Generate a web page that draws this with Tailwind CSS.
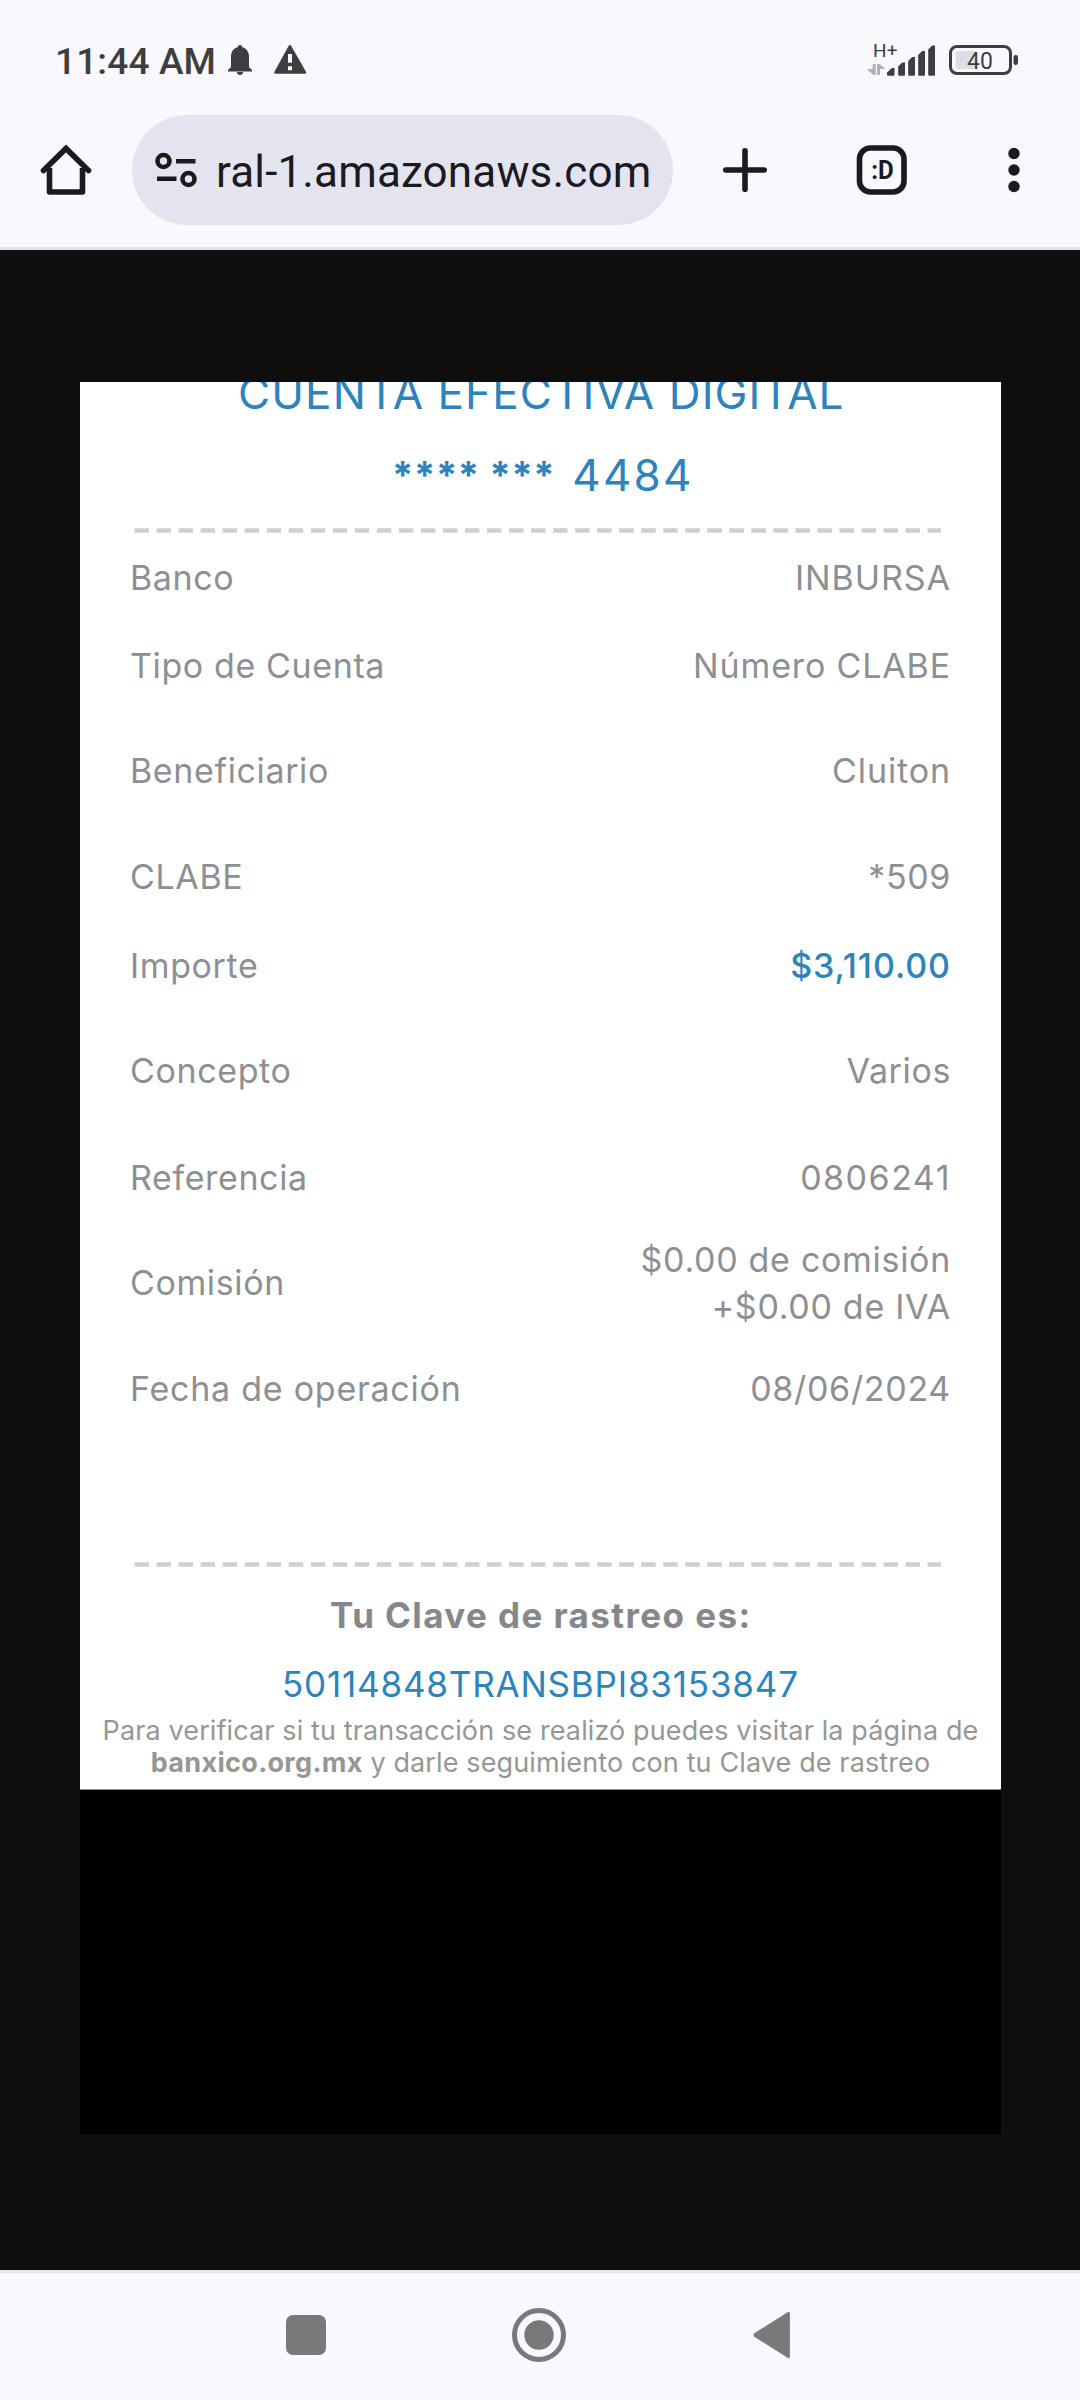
<!DOCTYPE html>
<html lang="es">
<head>
<meta charset="utf-8">
<title>Comprobante</title>
<script src="https://cdn.jsdelivr.net/npm/@tailwindcss/browser@4"></script>
</head>
<body class="w-[1080px] h-[2400px] overflow-hidden flex flex-col bg-[#0e0e0e] font-['Roboto',sans-serif]">

<!-- Status bar and browser toolbar -->
<header class="h-[250px] shrink-0 bg-[#f9f8ff] border-b-[3px] border-[#e2e1ec] flex flex-col">
  <div class="h-[115px] pt-[12px] pl-[55px] pr-[60px] flex items-center text-[#3e3e40]">
    <span class="text-[37px] leading-[44px] font-medium tracking-[0.14px] h-[48px]">11:44 AM</span>
    <svg class="ml-[10px] -mt-[7px]" width="84" height="34" viewBox="226 43 84 34" fill="#3e3e40">
      <path d="M240 45c1.500 0 2.300 1 2.400 2.300C246.500 48.500 249 52 249 56.500V67l3 3v1.500H228V70l3-3V56.500c0-4.500 2.500-8 6.600-9.200.1-1.300.9-2.300 2.400-2.300zM236.800 72h6.400c-.4 2-1.500 3-3.200 3s-2.800-1-3.200-3z"/>
      <path fill-rule="evenodd" d="M288.700 45.800q1.200-1.600 2.400 0l15 26.200q.6 1.800-1 1.800h-29.800q-1.600 0-1-1.800zM288 54v8.800h4V54zm0 12.300v4h4v-4z"/>
    </svg>
    <svg class="ml-auto -mt-[7px]" width="156" height="40" viewBox="864 40 156 40" fill="#3e3e40" font-family="Roboto, sans-serif">
      <text x="873" y="57" font-size="19" letter-spacing=".3">H+</text>
      <g fill="#b2b1b7"><path d="M872.700 64h3v11h-2l-6-5v-1h5zM877 75h3v-6h4.500v-1l-5-4H877z"/></g>
      <path d="M887 72.500l5-4.500h2.500v6.500q0 1.200-1.200 1.200h-5q-1.300 0-1.300-1.200zM898.200 66.500l4-4h2.800v12q0 1.200-1.200 1.200h-4.400q-1.200 0-1.200-1.200zM908.200 61l4-4h2.800v17.500q0 1.200-1.200 1.200h-4.400q-1.200 0-1.200-1.200zM918.200 55l4-4h2.800v23.500q0 1.200-1.200 1.200h-4.400q-1.200 0-1.200-1.200zM928.200 49.500l4-4h2.800v29q0 1.200-1.200 1.200h-4.400q-1.200 0-1.200-1.200z"/>
      <rect x="955.500" y="51" width="21" height="18" rx="3" fill="#e0dee5"/>
      <rect x="950.500" y="46.500" width="60" height="27" rx="6.500" fill="none" stroke="#3e3e40" stroke-width="3"/>
      <rect x="1013.500" y="55" width="4.500" height="10" rx="2.200"/>
      <text x="967" y="69" font-size="23">40</text>
    </svg>
  </div>
  <div class="h-[110px] flex items-center text-[#1b1a20]">
    <svg class="ml-[39px]" width="54" height="54" viewBox="39 143 54 54" fill="none" stroke="#1b1a20" stroke-width="5.600">
      <path d="M49.500 168V192H82.500V168" stroke-linejoin="round"/>
      <path d="M43.500 170.500L66 148.500L88.500 170.500" stroke-linecap="round"/>
    </svg>
    <div class="ml-[39px] w-[541px] h-[110px] rounded-[55px] bg-[#e4e4f0] flex items-center">
      <svg class="ml-[21px]" width="46" height="40" viewBox="153 150 46 40" fill="none" stroke="#1b1a20" stroke-width="4.600">
        <circle cx="163.500" cy="161" r="6"/><path d="M176 161.300h19.500M157 178.800h19.500"/><circle cx="188.500" cy="179" r="6"/>
      </svg>
      <span class="ml-[17px] text-[44px] leading-[52px] tracking-[0.15px] mt-[4px] whitespace-nowrap">ral-1.amazonaws.com</span>
    </div>
    <svg class="ml-[48px]" width="48" height="48" viewBox="0 0 48 48" stroke="#1b1a20" stroke-width="5.600" stroke-linecap="round"><path d="M24 4.800v38.400M4.800 24h38.400"/></svg>
    <svg class="ml-[87px]" width="52" height="52" viewBox="856 144 52 52" font-family="Roboto, sans-serif">
      <rect x="859.500" y="148" width="44.500" height="44" rx="11" fill="none" stroke="#1b1a20" stroke-width="5.600"/>
      <text x="871.300" y="179" font-size="26" font-weight="700" textLength="22.500" lengthAdjust="spacingAndGlyphs" fill="#1b1a20">:D</text>
    </svg>
    <svg class="ml-[100px]" width="12" height="48" viewBox="0 0 12 48" fill="#1b1a20"><circle cx="6" cy="7.500" r="5.700"/><circle cx="6" cy="24" r="5.700"/><circle cx="6" cy="40.500" r="5.700"/></svg>
  </div>
</header>

<!-- Image viewer -->
<main class="flex-1 pt-[132px] pl-[80px]">
  <div class="w-[921px] h-[1752px] bg-black font-['Inter',sans-serif] text-[34px] text-[#8e8f94]">
    <article class="h-[1408px] bg-white overflow-hidden border-b border-[#8a8a8a] flex flex-col">
      <div class="-mt-[17px] h-[56px] shrink-0 pl-[158px] text-[44px] leading-[56px] tracking-[1.1px] text-[#2c83bd] whitespace-nowrap">CUENTA EFECTIVA DIGITAL</div>
      <div class="mt-[26px] h-[56px] shrink-0 pl-[312px] text-[44px] leading-[56px] text-[#2c83bd] flex whitespace-nowrap"><span class="text-[38px] font-bold tracking-[0.7px]">**** ***</span><span class="ml-[17px] tracking-[2.2px]">4484</span></div>
      <svg class="mt-[25px] ml-[54px] shrink-0" width="808" height="5" viewBox="0 0 808 5"><path d="M0.500 2.500H807" stroke="#cfcfd0" stroke-width="4.500" stroke-dasharray="14.500 7.530"/></svg>

      <div class="px-[50px] tracking-[0.62px] leading-[47px] text-right">
        <div class="h-[88px] flex items-center justify-between"><span>Banco</span><span class="tracking-[0.95px]">INBURSA</span></div>
        <div class="h-[89px] flex items-center justify-between"><span>Tipo de Cuenta</span><span class="tracking-[0.85px]">Número CLABE</span></div>
        <div class="h-[120px] flex items-center justify-between"><span>Beneficiario</span><span class="tracking-[0.9px]">Cluiton</span></div>
        <div class="h-[93px] flex items-center justify-between"><span>CLABE</span><span>*509</span></div>
        <div class="h-[84px] flex items-center justify-between"><span>Importe</span><span class="font-medium tracking-[0.94px] text-[#2c83bd]">$3,110.00</span></div>
        <div class="h-[127px] flex items-center justify-between"><span>Concepto</span><span>Varios</span></div>
        <div class="h-[86px] flex items-center justify-between"><span>Referencia</span><span class="tracking-[1.5px]">0806241</span></div>
        <div class="h-[125px] flex items-center justify-between"><span>Comisión</span><span class="tracking-[0.7px]">$0.00 de comisión<br>+$0.00 de IVA</span></div>
        <div class="h-[87px] flex items-center justify-between"><span class="tracking-[0.75px]">Fecha de operación</span><span class="tracking-[0.7px]">08/06/2024</span></div>
      </div>

      <svg class="mt-[130px] ml-[54px] shrink-0" width="808" height="5" viewBox="0 0 808 5"><path d="M0.500 2.500H807" stroke="#cfcfd0" stroke-width="4.500" stroke-dasharray="14.500 7.530"/></svg>
      <div class="mt-[24px] h-[48px] shrink-0 pl-[250px] text-[35px] leading-[48px] font-bold tracking-[1.4px] text-[#86878c] whitespace-nowrap">Tu Clave de rastreo es:</div>
      <div class="mt-[21px] h-[48px] shrink-0 pl-[202px] text-[35px] leading-[48px] tracking-[0.8px] text-[#2c83bd] whitespace-nowrap">50114848TRANSBPI83153847</div>
      <div class="mt-[7px] shrink-0 text-center text-[27px] leading-[32px] tracking-[0.12px] text-[#969696] whitespace-nowrap">Para verificar si tu transacción se realizó puedes visitar la página de<br><b class="font-bold tracking-[0.32px]">banxico.org.mx</b> y darle seguimiento con tu Clave de rastreo</div>
    </article>
  </div>
</main>

<!-- System navigation -->
<nav class="h-[130px] pb-[3px] shrink-0 bg-[#f9f8ff] border-t-[3px] border-[#e4e4ec] flex items-center">
  <div class="ml-[286px] w-[40px] h-[40px] rounded-[7px] bg-[#79797b]"></div>
  <svg class="ml-[186px]" width="54" height="56" viewBox="0 0 54 56"><circle cx="27" cy="28" r="24.500" fill="none" stroke="#79797b" stroke-width="5"/><circle cx="27" cy="28" r="14.700" fill="#79797b"/></svg>
  <svg class="ml-[187px]" width="38" height="48" viewBox="0 0 38 48"><path d="M34.500 1.200Q36.900 0 36.900 2.500V45.500Q36.900 48 34.500 46.800L1.400 25.800Q-.4 24 1.400 22.200Z" fill="#79797b"/></svg>
</nav>
</body>
</html>
